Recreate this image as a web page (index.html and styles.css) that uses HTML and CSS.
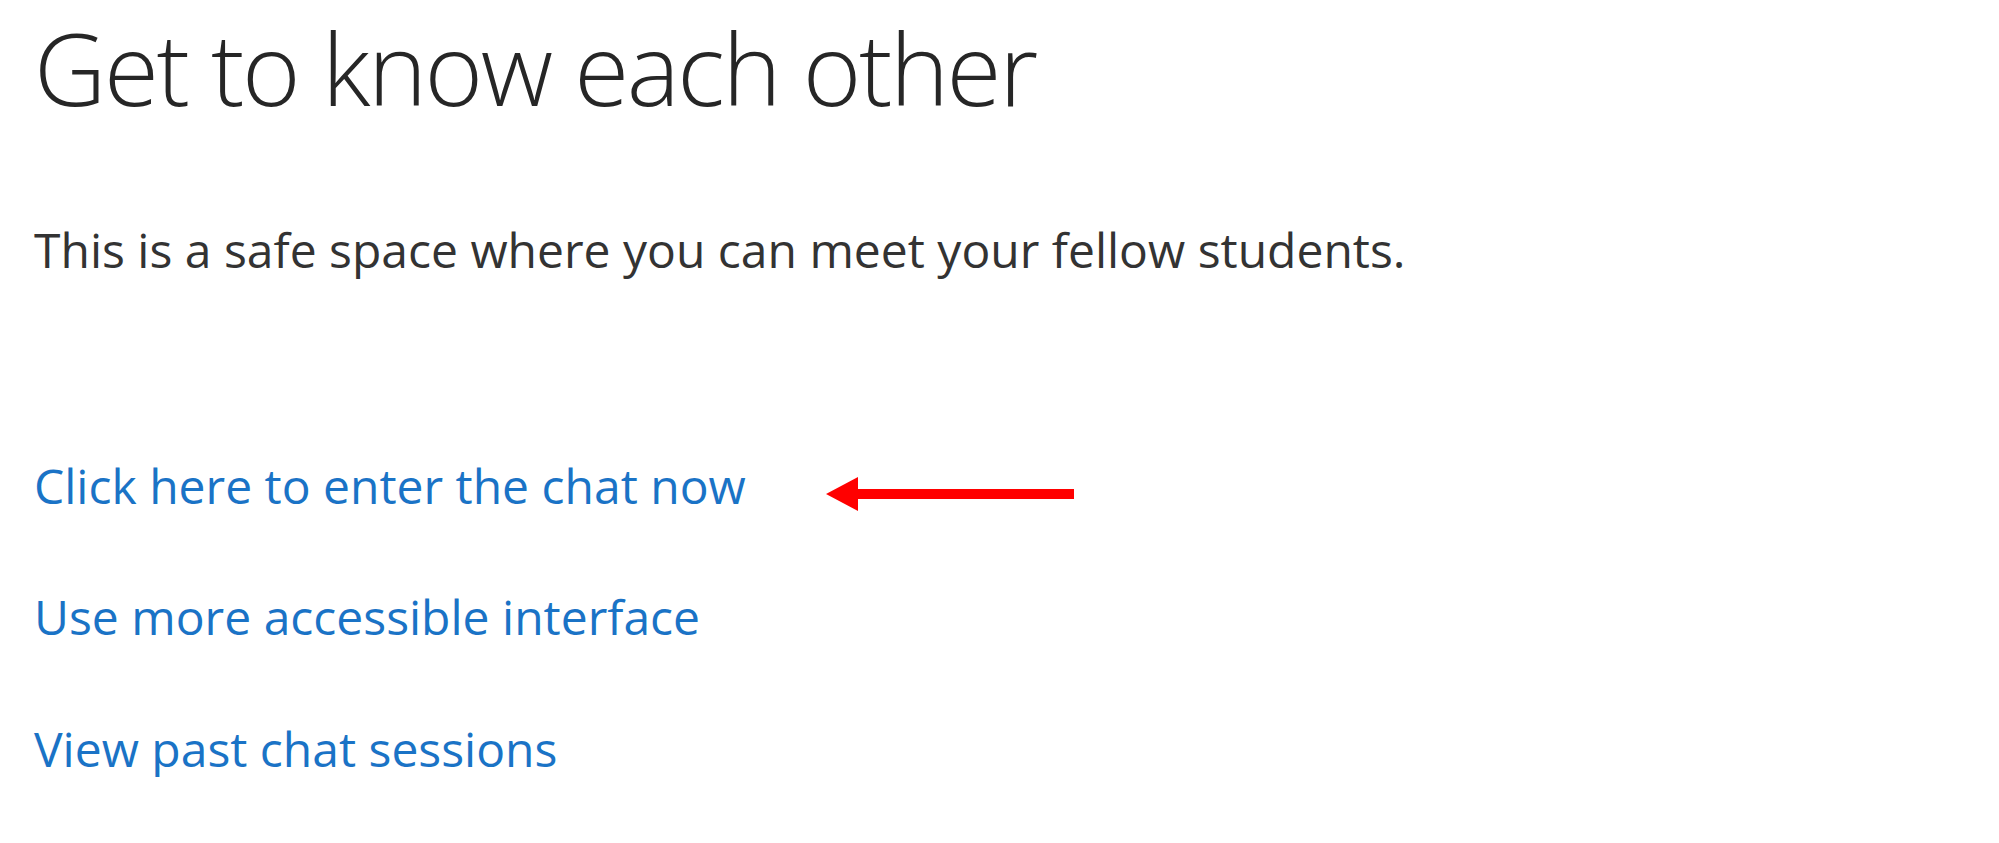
FILE: index.html
```html
<!DOCTYPE html>
<html lang="en">
<head>
    <meta charset="UTF-8">
    <meta name="viewport" content="width=device-width, initial-scale=1.0">
    <title>Get to know each other</title>
    <link rel="stylesheet" href="styles.css">
</head>
<body>
    <main class="page">
        <h1 class="title">Get to know each other</h1>
        <p class="intro">This is a safe space where you can meet your fellow students.</p>

        <ul class="links">
            <li class="link-row">
                <a href="#" class="link">Click here to enter the chat now</a>
                <svg class="arrow" width="250" height="36" viewBox="0 0 250 36">
                    <polygon points="1,18 33,1 33,13 249,13 249,23 33,23 33,35" fill="#ff0000"/>
                </svg>
            </li>
            <li class="link-row">
                <a href="#" class="link">Use more accessible interface</a>
            </li>
            <li class="link-row">
                <a href="#" class="link">View past chat sessions</a>
            </li>
        </ul>
    </main>
</body>
</html>
```

FILE: styles.css
```css
body {
    margin: 0;
    background-color: #ffffff;
    font-family: "Open Sans", "Noto Sans", "Liberation Sans", sans-serif;
}
.page {
    padding: 7px 0 0 34px;
}
.title {
    margin: 0;
    font-size: 100px;
    font-weight: 300;
    line-height: 120px;
    letter-spacing: -2.4px;
    color: #262626;
}
.intro {
    margin: 94px 0 0 0;
    font-size: 48px;
    line-height: 57.6px;
    color: #333333;
}
.links {
    list-style: none;
    margin: 178px 0 0 0;
    padding: 0;
    display: flex;
    flex-direction: column;
    gap: 74px;
}
.link-row {
    display: flex;
    align-items: center;
    font-size: 48px;
    line-height: 57.6px;
}
.link {
    color: #1a73c6;
    text-decoration: none;
}
.arrow {
    margin-left: 79px;
    margin-top: 17px;
}
```
